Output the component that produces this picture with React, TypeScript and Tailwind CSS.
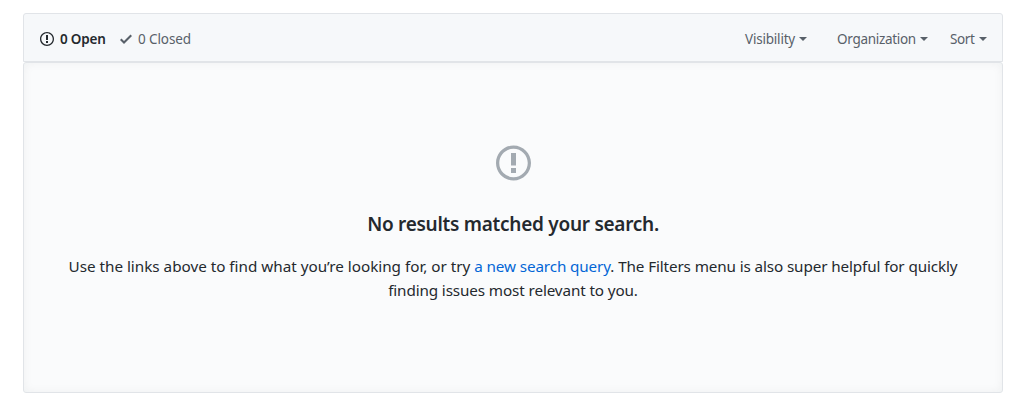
import type { ReactNode } from "react";

function IssueIcon({ className }: { className: string }) {
  return (
    <svg viewBox="0 0 14 16" fill="currentColor" className={className} aria-hidden="true">
      <path
        fillRule="evenodd"
        d="M7 2.3c3.14 0 5.7 2.56 5.7 5.7s-2.56 5.7-5.7 5.7A5.71 5.71 0 0 1 1.3 8c0-3.14 2.56-5.7 5.7-5.7zM7 1C3.14 1 0 4.14 0 8s3.14 7 7 7 7-3.14 7-7-3.14-7-7-7zm1 3H6v5h2V4zm0 6H6v2h2v-2z"
      />
    </svg>
  );
}

function CheckIcon() {
  return (
    <svg viewBox="0 0 12 16" fill="currentColor" className="h-4 w-3" aria-hidden="true">
      <path fillRule="evenodd" d="M12 5l-8 8-4-4 1.5-1.5L4 10l6.5-6.5L12 5z" />
    </svg>
  );
}

function Filter({ children, width }: { children: ReactNode; width: string }) {
  return (
    <button className="flex items-center gap-[5px] whitespace-nowrap">
      <span className={width}>{children}</span>
      <span className="h-0 w-0 border-x-4 border-t-4 border-x-transparent border-t-[#586069]" />
    </button>
  );
}

export default function App() {
  return (
    <main className="h-[409px] bg-white pt-[13px] pr-[29px] pl-[23px] font-['Noto_Sans',sans-serif] text-[#24292e]">
      <div className="flex h-[49px] items-center justify-between rounded-t-[3px] border border-[#e1e4e8] bg-[#f6f8fa] pt-[3px] pr-[15px] pl-4 text-[13.5px] leading-5 text-[#586069]">
        <div className="flex items-center">
          <a className="flex items-center text-[#24292e]">
            <IssueIcon className="mr-[6px] h-4 w-3.5" />
            <span className="w-[46px] whitespace-nowrap font-semibold tracking-[-0.2px]">0 Open</span>
          </a>
          <a className="ml-[14px] flex items-center">
            <CheckIcon />
            <span className="ml-[6px] whitespace-nowrap tracking-[-0.1px]">0 Closed</span>
          </a>
        </div>
        <div className="flex items-center">
          <Filter width="w-[49px] tracking-[-0.2px]">Visibility</Filter>
          <div className="ml-[30px]">
            <Filter width="w-[78px] tracking-[-0.3px]">Organization</Filter>
          </div>
          <div className="ml-[22px]">
            <Filter width="w-[24px] tracking-[-0.4px]">Sort</Filter>
          </div>
        </div>
      </div>
      <section className="flex h-[331px] flex-col items-center rounded-[3px] border border-[#e1e4e8] bg-[#fafbfc] pt-20 text-center shadow-[inset_0_0_10px_rgba(27,31,35,0.05)]">
        <IssueIcon className="h-10 w-[35px] text-[#a3aab1]" />
        <h3 className="mt-[26px] text-[19px] leading-[30px] font-semibold tracking-[-0.27px] whitespace-nowrap">
          No results matched your search.
        </h3>
        <p className="mt-[15px] text-[15.25px] leading-6 tracking-[-0.12px] whitespace-nowrap">
          <span className="tracking-[-0.01px]">Use the links above to find what you’re looking for, or try </span>
          <a className="text-[#0366d6]">a new search query</a>. The Filters menu is also super helpful for quickly
          <br />
          finding issues most relevant to you.
        </p>
      </section>
    </main>
  );
}
